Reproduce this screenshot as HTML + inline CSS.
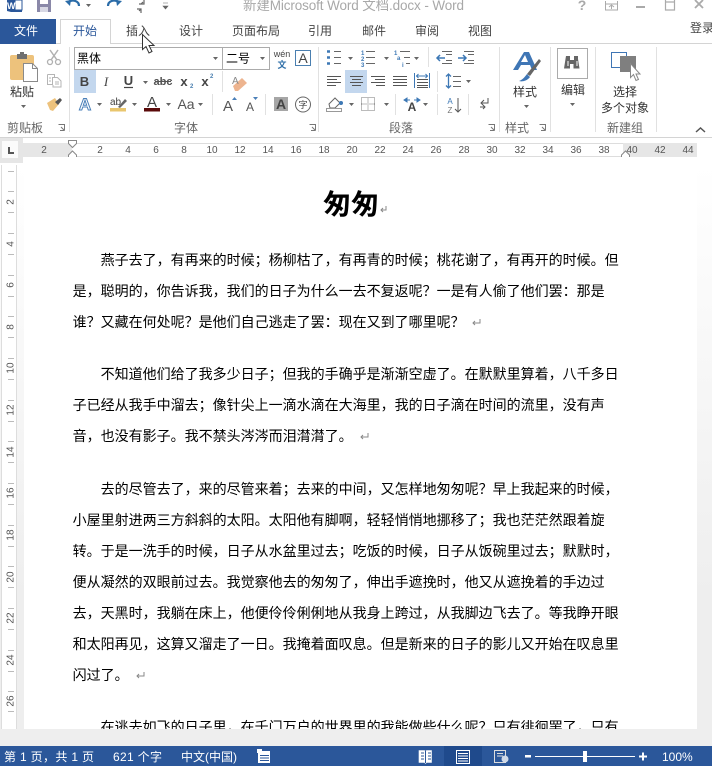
<!DOCTYPE html>
<html lang="zh"><head><meta charset="utf-8"><title>Word</title>
<style>
html,body{margin:0;padding:0;background:#eee;width:712px;height:766px;overflow:hidden}
svg{display:block;position:absolute;left:0;top:0}
text{font-family:"Liberation Sans","Noto Sans CJK SC",sans-serif}
.r{font-size:12px;fill:#444;text-anchor:middle}
.g{font-size:12px;fill:#666;text-anchor:middle}
.n{font-size:10px;fill:#555;text-anchor:middle}
.d{font-family:"WenQuanYi Zen Hei","Noto Sans CJK SC",sans-serif;font-size:14px;fill:#000}
.t{font-size:12px;fill:#fff}
</style></head><body>
<svg width="712" height="766" viewBox="0 0 712 766" xmlns="http://www.w3.org/2000/svg">
<defs><linearGradient id="bg" gradientUnits="userSpaceOnUse" x1="0" y1="165" x2="0" y2="600"><stop offset="0" stop-color="#fff"/><stop offset="1" stop-color="#eee"/></linearGradient></defs>
<rect width="712" height="766" fill="#eee"/>
<rect y="157" width="712" height="572" fill="url(#bg)"/>
<rect width="712" height="157" fill="#fff"/>
<!-- title bar -->
<path d="M7 0h15v12H11l-4-1z" fill="#2B579A"/><path d="M15 0h7v10h-7z" fill="#fff" stroke="#2B579A"/><text x="7" y="9" font-size="9" font-weight="bold" fill="#fff">W</text>
<path d="M37 0h14v12H37z" fill="#8a88a8"/><rect x="40" y="0" width="8" height="4" fill="#fff"/><rect x="40" y="7" width="8" height="5" fill="#d8d8e4"/>
<path d="M68 2c5-3 11-1 11 4" fill="none" stroke="#2B6CA8" stroke-width="2.200"/><path d="M65 1l6-1-1 6z" fill="#2B6CA8"/>
<path d="M86 4h5l-2.500 3z" fill="#666"/>
<path d="M119 2c-5-3-11-1-11 4" fill="none" stroke="#2B6CA8" stroke-width="2.200"/><path d="M122 1l-6-1 1 6z" fill="#2B6CA8"/>
<path d="M144 0v4h-5M137 9h4v4M141 4l2-2M141 9l-2 2" fill="none" stroke="#666" stroke-width="1.200"/>
<path d="M163 3h5M163 6h5l-2.500 3z" fill="#666" stroke="#666" stroke-width=".6"/>
<text x="243" y="10" font-size="13.500" fill="#a8a8a8" textLength="221">新建Microsoft Word 文档.docx - Word</text>
<text x="582" y="10" font-size="14" font-weight="bold" fill="#a9a9a9" text-anchor="middle">?</text>
<path d="M605.500 1v9h12V1M605 4h13M611.500 9V5.500M609 7l2.500-2 2.500 2" fill="none" stroke="#aaa"/>
<rect x="636" y="6" width="9" height="2" fill="#aaa"/>
<path d="M665.500 0v10h9V0M665 2h10" fill="none" stroke="#aaa" stroke-width="1.200"/>
<path d="M695 0l8 8M703 0l-8 8" stroke="#aaa" stroke-width="1.800"/>
<!-- tabs -->
<path d="M0 43.500H712" stroke="#d4d4d4"/>
<rect x="0" y="19" width="56" height="25" fill="#2B579A"/>
<path d="M60.500 44V19.500h50V44" fill="#fff" stroke="#d4d4d4"/><rect x="61" y="43" width="49" height="1" fill="#fff"/>
<text x="26" y="35" font-size="12" fill="#fff" text-anchor="middle">文件</text>
<text x="85" y="35" font-size="12" fill="#2B579A" text-anchor="middle">开始</text>
<text x="138" y="35" class="r">插入</text><text x="191" y="35" class="r">设计</text><text x="256" y="35" class="r">页面布局</text><text x="320" y="35" class="r">引用</text><text x="374" y="35" class="r">邮件</text><text x="427" y="35" class="r">审阅</text><text x="480" y="35" class="r">视图</text>
<text x="690" y="32" font-size="12" fill="#444">登录</text>
<!-- separators -->
<path d="M69.500 47v85M318.500 47v85M499.500 47v85M550.500 47v85M595.500 47v85M656.500 47v85" stroke="#e1e1e1"/>
<path d="M0 137.500H712" stroke="#d4d4d4"/>
<!-- clipboard -->
<rect x="10" y="55" width="24" height="25" rx="2" fill="#EDC27C"/><rect x="17" y="54" width="10" height="5" fill="#6f6f6f"/><rect x="20" y="52" width="4" height="3" fill="#6f6f6f"/>
<path d="M23.500 63.500h9l5 5v13h-14z" fill="#fff" stroke="#8a8a8a"/><path d="M32.500 63.500v5h5" fill="none" stroke="#8a8a8a"/>
<text x="22" y="96" class="r" style="font-size:12px;fill:#333">粘贴</text>
<path d="M21 105h5l-2.500 3z" fill="#666"/>
<path d="M50 50l7 10M58 50l-7 10" stroke="#b0b0b0" stroke-width="1.500"/><circle cx="50" cy="62" r="2.500" fill="none" stroke="#b0b0b0" stroke-width="1.300"/><circle cx="58" cy="62" r="2.500" fill="none" stroke="#b0b0b0" stroke-width="1.300"/>
<path d="M47.500 74.500h7v3M54.500 77.500h3l3.500 3.500v6h-8v-2M47.500 74.500v10h5v-7h2M49 78h2M49 81h2M55 82h4M55 84h4" fill="none" stroke="#b5b5b5"/>
<path d="M47 103l8-5 4 6-6 7-3-1z" fill="#EDC27C"/><path d="M55 102l5-4 2 2-4 5z" fill="#555"/>
<text x="25" y="132" class="g">剪贴板</text>
<path d="M58.500 124.500h6v6M61 127l3 3M60 130.500h4.500" fill="none" stroke="#777"/>
<!-- font -->
<rect x="74.500" y="47.500" width="148" height="22" fill="#fff" stroke="#ababab"/><rect x="222.500" y="47.500" width="47" height="22" fill="#fff" stroke="#ababab"/>
<text x="77" y="62.500" font-size="12" fill="#000">黑体</text>
<text x="226" y="62.500" font-size="12" fill="#000">二号</text>
<path d="M213 57h5l-2.500 3zM260 57h5l-2.500 3z" fill="#666"/>
<text x="282" y="57" font-size="9" fill="#444" text-anchor="middle">wén</text><text x="282" y="68" font-size="9" fill="#2f6fa8" text-anchor="middle" font-weight="bold">文</text>
<rect x="295.500" y="50.500" width="15" height="15" fill="#fff" stroke="#4a7fb0"/><text x="303" y="63" font-size="14" fill="#444" text-anchor="middle">A</text>
<rect x="74" y="70" width="22" height="23" fill="#C3D7EE"/>
<text x="84.500" y="86" font-size="13" font-weight="bold" fill="#444" text-anchor="middle">B</text>
<text x="106" y="86" font-size="13" font-style="italic" fill="#444" text-anchor="middle" style="font-family:'Liberation Serif',serif">I</text>
<text x="128.500" y="85" font-size="13" fill="#444" text-anchor="middle" font-weight="bold">U</text><path d="M124 87.500h9" stroke="#444" stroke-width="1.200"/>
<path d="M143 81h5l-2.500 3z" fill="#666"/>
<text x="163" y="85" font-size="11" fill="#555" text-anchor="middle" font-weight="bold">abc</text><path d="M155 81.500h16" stroke="#555"/>
<text x="184" y="86" font-size="13" font-weight="bold" fill="#444" text-anchor="middle">x</text><text x="190" y="88" font-size="6" fill="#4a7fb0" font-weight="bold">2</text>
<text x="205" y="86" font-size="13" font-weight="bold" fill="#444" text-anchor="middle">x</text><text x="210" y="78" font-size="6" fill="#4a7fb0" font-weight="bold">2</text>
<path d="M222.500 71v21" stroke="#e1e1e1"/>
<path d="M233 86l9-8 5 5-9 8h-3z" fill="#EDB48F"/><text x="232" y="84" font-size="10" fill="#888">A</text>
<text x="85" y="110" font-size="17" fill="#fff" stroke="#4a7fb8" stroke-width="1" font-weight="bold" text-anchor="middle">A</text>
<path d="M97 103h5l-2.500 3zM132 103h5l-2.500 3zM166 103h5l-2.500 3zM198 103h5l-2.500 3z" fill="#666"/>
<text x="110" y="105" font-size="10" fill="#444">ab</text><path d="M118 107l7-8 2 2-7 7z" fill="#666"/><rect x="110" y="108" width="16" height="3.500" fill="#E9C66E"/>
<text x="152" y="107" font-size="15" fill="#444" text-anchor="middle">A</text><rect x="144" y="108" width="16" height="3.500" fill="#5A0A0A"/>
<text x="186" y="109" font-size="14" fill="#555" text-anchor="middle">Aa</text>
<path d="M212.500 94v21" stroke="#e1e1e1"/>
<text x="228" y="111" font-size="15" fill="#555" text-anchor="middle">A</text><path d="M232 100l2.500-3 2.500 3z" fill="#4a7fb8"/>
<text x="250" y="111" font-size="12" fill="#555" text-anchor="middle">A</text><path d="M253 97l2.500 3 2.500-3z" fill="#4a7fb8"/>
<path d="M265.500 94v21" stroke="#e1e1e1"/>
<rect x="274" y="97" width="14" height="14" fill="#a6a6a6"/><text x="281" y="109" font-size="14" font-weight="bold" fill="#444" text-anchor="middle">A</text>
<circle cx="303" cy="104.500" r="7.500" fill="none" stroke="#666"/><text x="303" y="108" font-size="9" fill="#444" text-anchor="middle">字</text>
<text x="186" y="132" class="g">字体</text>
<path d="M309.500 124.500h6v6M312 127l3 3M311 130.500h4.500" fill="none" stroke="#777"/>
<!-- paragraph -->
<path d="M327 51.500h3M327 57.500h3M327 63.500h3" stroke="#3d78b5" stroke-width="2.500"/>
<path d="M334 51.500h7M334 57.500h7M334 63.500h7M366 51.500h9M366 57.500h9M366 63.500h9" stroke="#666"/>
<text x="361" y="55" font-size="6" font-weight="bold" fill="#3d78b5">1</text><text x="361" y="61" font-size="6" font-weight="bold" fill="#3d78b5">2</text><text x="361" y="67" font-size="6" font-weight="bold" fill="#3d78b5">3</text>
<path d="M348 57h5l-2.500 3zM384 57h5l-2.500 3zM414 57h5l-2.500 3z" fill="#666"/>
<text x="394" y="55" font-size="6" font-weight="bold" fill="#3d78b5">1</text><text x="397" y="60" font-size="6" font-weight="bold" fill="#3d78b5">a</text><text x="402" y="67" font-size="6" font-weight="bold" fill="#3d78b5">i</text>
<path d="M400 51.500h10M404 57.500h6M406 63.500h4" stroke="#666"/>
<path d="M428.500 47v20" stroke="#e1e1e1"/>
<path d="M442 51.500h10M446 54.500h6M446 60.500h6M442 63.500h10" stroke="#666"/><path d="M445 58h-8M440 55l-3 3 3 3" fill="none" stroke="#3d78b5" stroke-width="1.500"/>
<path d="M464 51.500h10M468 54.500h6M468 60.500h6M464 63.500h10" stroke="#666"/><path d="M458 58h8M463 55l3 3-3 3" fill="none" stroke="#3d78b5" stroke-width="1.500"/>
<rect x="345" y="70" width="22" height="23" fill="#C3D7EE"/>
<path d="M327 76.500h14M327 79.500h10M327 82.500h14M327 85.500h9M350 76.500h13M352 79.500h9M350 82.500h13M352 85.500h9M371 76.500h14M375 79.500h10M371 82.500h14M376 85.500h9M393 76.500h14M393 79.500h14M393 82.500h14M393 85.500h14M417 79.500h11M417 82.500h11M417 85.500h11M417 87.500h11" stroke="#555"/>
<path d="M414.500 73v15M429.500 73v15" stroke="#3d78b5"/><path d="M416 76h12M418.500 74l-2 2 2 2M425.500 74l2 2-2 2" fill="none" stroke="#3d78b5"/>
<path d="M437.500 71v21" stroke="#e1e1e1"/>
<path d="M448.500 74v14M446 76.500l2.500-2.500 2.500 2.500M446 85.500l2.500 2.500 2.500-2.500" fill="none" stroke="#3d78b5" stroke-width="1.300"/><path d="M453 76.500h8M453 81.500h8M453 86.500h8" stroke="#666"/>
<path d="M466 80h5l-2.500 3zM349 103h5l-2.500 3zM384 103h5l-2.500 3zM423 103h5l-2.500 3z" fill="#666"/>
<path d="M329 104l6-6 5 5-5 5h-5z" fill="#fff" stroke="#666"/><circle cx="341" cy="103" r="2" fill="#3d78b5"/><rect x="326.500" y="108.500" width="15" height="3" fill="#fff" stroke="#999"/>
<path d="M361.500 97.500h13v13h-13zM368 97.500v13M361.500 104h13" fill="none" stroke="#777" stroke-dasharray="1 1"/>
<path d="M395.500 94v21" stroke="#e1e1e1"/>
<text x="412" y="111" font-size="12" font-weight="bold" fill="#444" text-anchor="middle">A</text><path d="M404 100l3-2v4zM420 100l-3-2v4zM407 100h3M414 100h3" fill="#3d78b5" stroke="#3d78b5"/>
<path d="M437.500 94v21" stroke="#e1e1e1"/>
<text x="450" y="104" font-size="8" fill="#3d78b5" text-anchor="middle">A</text><text x="450" y="113" font-size="8" fill="#777" text-anchor="middle">Z</text><path d="M458 98v14M455 109l3 3 3-3" fill="none" stroke="#555"/>
<path d="M468.500 94v21" stroke="#e1e1e1"/>
<path d="M488 98v5h-7M484 100l-3 3 3 3M480 107h5M483 105l2 2-2 2" fill="none" stroke="#555"/>
<text x="401" y="132" class="g">段落</text>
<path d="M488.500 124.500h6v6M491 127l3 3M490 130.500h4.500" fill="none" stroke="#777"/>
<!-- styles -->
<path d="M513 70L524 52h5l8 18h-5l-2-5h-9l-3 5zM521 62h7l-3-7z" fill="#3F76B5" fill-rule="evenodd"/>
<path d="M527 74l12-15 2 2-11 15z" fill="#666"/><path d="M527 74l3 3c-3 4-8 5-11 4 3-1 5-3 8-7z" fill="#3F76B5"/>
<text x="525" y="96" class="r" style="fill:#333">样式</text>
<path d="M524 105h5l-2.500 3z" fill="#666"/>
<text x="517" y="132" class="g">样式</text>
<path d="M539.500 124.500h6v6M542 127l3 3M541 130.500h4.500" fill="none" stroke="#777"/>
<!-- edit -->
<rect x="557.500" y="48.500" width="30" height="30" fill="#fff" stroke="#ababab"/>
<path d="M566 56h4v4h4v-4h4v3l1.500 9.500h-6V64h-3.500v4.500h-6L565.500 59z" fill="#666"/><path d="M567.500 61h1v5h-1zM576.500 61h1v5h-1z" fill="#fff"/>
<text x="573" y="94" class="r" style="fill:#333">编辑</text>
<path d="M570 103h5l-2.500 3z" fill="#666"/>
<!-- new group -->
<rect x="611.500" y="52.500" width="15" height="15" fill="#fff" stroke="#3F76B5"/>
<rect x="620" y="56" width="16" height="16" fill="#7f7f7f"/>
<path d="M630.500 63.500v14l3-3 2.500 6 2.500-1-2.500-5.500h4z" fill="#fff" stroke="#888"/>
<text x="625" y="96" class="r" style="fill:#333">选择</text>
<text x="625" y="112" class="r" style="fill:#333">多个对象</text>
<text x="625" y="132" class="g">新建组</text>
<path d="M696 132l4.500-4 4.500 4" fill="none" stroke="#555" stroke-width="1.500"/>
<!-- horizontal ruler -->
<rect x="0" y="138" width="23" height="25" fill="#e6e6e6"/><rect x="2" y="141" width="16" height="17" fill="#fbfbfb"/>
<path d="M8 147v7h6v-2h-4v-5z" fill="#555"/>
<rect x="23" y="143" width="674" height="14" fill="#e6e6e6"/><rect x="72" y="144" width="551" height="12" fill="#fff"/><path d="M72 143.500h551M72 156.500h551" stroke="#ddd"/>
<g><text class="n" x="44" y="153">2</text><text class="n" x="100" y="153">2</text><text class="n" x="128" y="153">4</text><text class="n" x="156" y="153">6</text><text class="n" x="184" y="153">8</text><text class="n" x="212" y="153">10</text><text class="n" x="240" y="153">12</text><text class="n" x="268" y="153">14</text><text class="n" x="296" y="153">16</text><text class="n" x="324" y="153">18</text><text class="n" x="352" y="153">20</text><text class="n" x="380" y="153">22</text><text class="n" x="408" y="153">24</text><text class="n" x="436" y="153">26</text><text class="n" x="464" y="153">28</text><text class="n" x="492" y="153">30</text><text class="n" x="520" y="153">32</text><text class="n" x="548" y="153">34</text><text class="n" x="576" y="153">36</text><text class="n" x="604" y="153">38</text><text class="n" x="632" y="153">40</text><text class="n" x="660" y="153">42</text><text class="n" x="688" y="153">44</text></g>
<path d="M68.500 140.500h8v3l-4 4-4-4z" fill="#fff" stroke="#888"/><path d="M72.500 151l4 4v3.500h-8V155z" fill="#fff" stroke="#888"/><rect x="68.500" y="158.500" width="8" height="6" fill="#fff" stroke="#888"/>
<path d="M625.500 151l4 4v3.500h-8V155z" fill="#fff" stroke="#888"/>
<!-- vertical ruler + page -->
<rect x="2" y="165" width="14" height="564" fill="#fff"/><path d="M1.500 165v564M16.500 165v564" stroke="#ddd"/>
<rect x="24" y="157" width="673" height="572" fill="#fff"/>
<path d="M8 171.500h6M8 191.500h6M8 212.500h6M8 233.500h6M8 254.500h6M8 275.500h6M8 296.500h6M8 316.500h6M8 337.500h6M8 358.500h6M8 379.500h6M8 400.500h6M8 421.500h6M8 441.500h6M8 462.500h6M8 483.500h6M8 504.500h6M8 525.500h6M8 546.500h6M8 566.500h6M8 587.500h6M8 608.500h6M8 629.500h6M8 650.500h6M8 671.500h6M8 691.500h6M8 711.500h6" stroke="#bbb"/>
<g>
<text transform="translate(13.500 202) rotate(-90)" class="n">2</text><text transform="translate(13.500 244) rotate(-90)" class="n">4</text><text transform="translate(13.500 285) rotate(-90)" class="n">6</text><text transform="translate(13.500 327) rotate(-90)" class="n">8</text><text transform="translate(13.500 368) rotate(-90)" class="n">10</text><text transform="translate(13.500 410) rotate(-90)" class="n">12</text><text transform="translate(13.500 452) rotate(-90)" class="n">14</text><text transform="translate(13.500 493) rotate(-90)" class="n">16</text><text transform="translate(13.500 535) rotate(-90)" class="n">18</text><text transform="translate(13.500 577) rotate(-90)" class="n">20</text><text transform="translate(13.500 618) rotate(-90)" class="n">22</text><text transform="translate(13.500 660) rotate(-90)" class="n">24</text><text transform="translate(13.500 701) rotate(-90)" class="n">26</text>
</g>
<!-- document -->
<text x="323" y="214" font-size="28" font-weight="bold" fill="#000" style="font-family:'Noto Sans CJK SC',sans-serif">匆匆</text>
<text class="d" x="100.600" y="265">燕子去了，有再来的时候；杨柳枯了，有再青的时候；桃花谢了，有再开的时候。但</text>
<text class="d" x="72.600" y="296">是，聪明的，你告诉我，我们的日子为什么一去不复返呢？一是有人偷了他们罢：那是</text>
<text class="d" x="72.600" y="327">谁？又藏在何处呢？是他们自己逃走了罢：现在又到了哪里呢？</text>
<text class="d" x="100.600" y="379">不知道他们给了我多少日子；但我的手确乎是渐渐空虚了。在默默里算着，八千多日</text>
<text class="d" x="72.600" y="410">子已经从我手中溜去；像针尖上一滴水滴在大海里，我的日子滴在时间的流里，没有声</text>
<text class="d" x="72.600" y="441">音，也没有影子。我不禁头涔涔而泪潸潸了。</text>
<text class="d" x="100.600" y="494">去的尽管去了，来的尽管来着；去来的中间，又怎样地匆匆呢？早上我起来的时候，</text>
<text class="d" x="72.600" y="525">小屋里射进两三方斜斜的太阳。太阳他有脚啊，轻轻悄悄地挪移了；我也茫茫然跟着旋</text>
<text class="d" x="72.600" y="556">转。于是一洗手的时候，日子从水盆里过去；吃饭的时候，日子从饭碗里过去；默默时，</text>
<text class="d" x="72.600" y="587">便从凝然的双眼前过去。我觉察他去的匆匆了，伸出手遮挽时，他又从遮挽着的手边过</text>
<text class="d" x="72.600" y="618">去，天黑时，我躺在床上，他便伶伶俐俐地从我身上跨过，从我脚边飞去了。等我睁开眼</text>
<text class="d" x="72.600" y="649">和太阳再见，这算又溜走了一日。我掩着面叹息。但是新来的日子的影儿又开始在叹息里</text>
<text class="d" x="72.600" y="680">闪过了。</text>
<text class="d" x="100.600" y="732">在逃去如飞的日子里，在千门万户的世界里的我能做些什么呢？只有徘徊罢了，只有</text>
<g fill="none" stroke="#888"><path d="M386 206v4h-5M383 208l-2 2 2 2"/><path d="M480 319v4h-7M475 321l-2 2 2 2"/><path d="M368 433v4h-7M363 435l-2 2 2 2"/><path d="M144 672v4h-7M139 674l-2 2 2 2"/></g>
<rect x="0" y="729" width="712" height="17" fill="#eee"/>
<!-- status -->
<rect x="0" y="746" width="712" height="20" fill="#2B579A"/>
<text class="t" x="4" y="761" textLength="90">第 1 页，共 1 页</text><text class="t" x="113" y="761" textLength="49">621 个字</text><text class="t" x="181" y="761" textLength="56">中文(中国)</text>
<path d="M258 751h12v12h-12z" fill="#fff"/><rect x="257" y="749" width="5" height="4" fill="#fff"/><path d="M260 755.500h9M260 758h9M260 760.500h9" stroke="#2B579A"/>
<rect x="444" y="746" width="38" height="20" fill="#1F4A8C"/>
<path d="M419 750.500h5.500l1 1 1-1h5v12h-5l-1 1-1-1h-5.500z" fill="#fff" stroke="#fff" stroke-width=".6"/><path d="M425.500 751v12M421 753h3M421 756h3M421 759h3M428 753h3M428 756h3M428 759h3" stroke="#2B579A"/>
<rect x="456.500" y="750.500" width="13" height="13" fill="none" stroke="#fff"/><path d="M458 753.500h10M458 756h10M458 758.500h10M458 761h10" stroke="#fff"/>
<rect x="494.500" y="750.500" width="11" height="12" fill="none" stroke="#ddd"/><path d="M497 753.500h6M497 756h6" stroke="#ddd"/><circle cx="505" cy="759" r="3.500" fill="#cfd9e8"/>
<rect x="525" y="755" width="6" height="2.500" fill="#fff"/>
<rect x="535" y="756" width="100" height="1" fill="#fff"/><rect x="583" y="751" width="4" height="11" fill="#fff"/>
<path d="M639 756.500h8M643 752.500v8" stroke="#fff" stroke-width="2"/>
<text class="t" x="662" y="761">100%</text>
<!-- cursor -->
<path d="M142.500 34.500v15l3.500-3 3 6.500 3-1.500-3-6h5z" fill="#fff" stroke="#333"/>
</svg>
</body></html>
